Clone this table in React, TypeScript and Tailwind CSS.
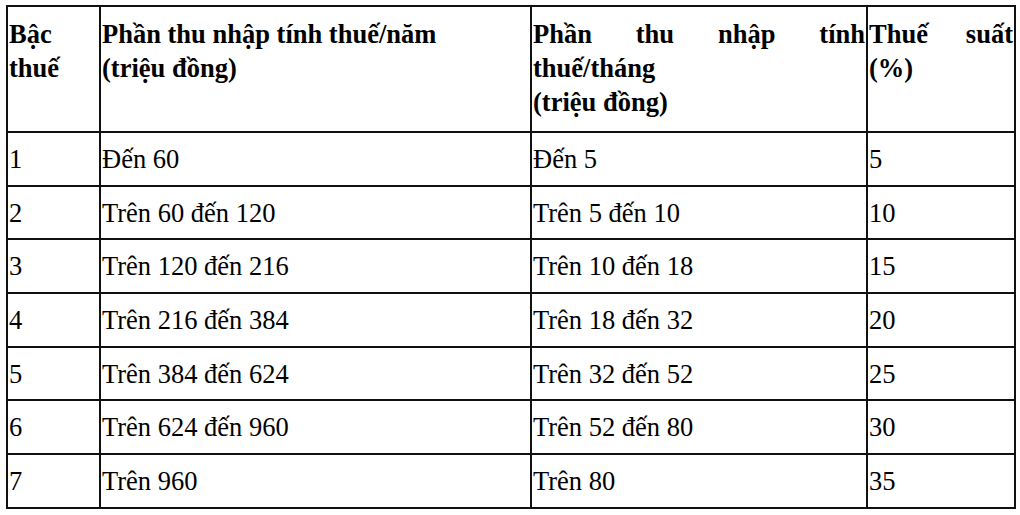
import React from 'react';

interface Bracket {
  level: number;
  yearly: string;
  monthly: string;
  rate: number;
}

const brackets: Bracket[] = [
  { level: 1, yearly: 'Đến 60', monthly: 'Đến 5', rate: 5 },
  { level: 2, yearly: 'Trên 60 đến 120', monthly: 'Trên 5 đến 10', rate: 10 },
  { level: 3, yearly: 'Trên 120 đến 216', monthly: 'Trên 10 đến 18', rate: 15 },
  { level: 4, yearly: 'Trên 216 đến 384', monthly: 'Trên 18 đến 32', rate: 20 },
  { level: 5, yearly: 'Trên 384 đến 624', monthly: 'Trên 32 đến 52', rate: 25 },
  { level: 6, yearly: 'Trên 624 đến 960', monthly: 'Trên 52 đến 80', rate: 30 },
  { level: 7, yearly: 'Trên 960', monthly: 'Trên 80', rate: 35 },
];

const cell = 'border-2 border-[#111] px-[1px] align-middle';
const head = 'border-2 border-[#111] px-[1px] pt-[10px] align-top font-bold';

const App: React.FC = () => {
  return (
    <div className="w-[1020px] h-[515px] bg-white pt-[5px] pl-[6px] text-black font-['Liberation_Serif','Times_New_Roman',serif] text-[26.5px] leading-[34px]">
      <table className="table-fixed border-collapse w-[1008px]">
        <colgroup>
          <col className="w-[93px]" />
          <col className="w-[431px]" />
          <col className="w-[336px]" />
          <col className="w-[148px]" />
        </colgroup>
        <thead>
          <tr className="h-[126px]">
            <th className={`${head} text-left`}>Bậc thuế</th>
            <th className={`${head} text-left`}>
              Phần thu nhập tính thuế/năm
              <br />
              (triệu đồng)
            </th>
            <th className={`${head} text-justify`}>
              Phần thu nhập tính thuế/tháng
              <br />
              (triệu đồng)
            </th>
            <th className={`${head} text-justify`}>Thuế suất (%)</th>
          </tr>
        </thead>
        <tbody>
          {brackets.map((b) => (
            <tr key={b.level} className="h-[53.7px]">
              <td className={cell}>{b.level}</td>
              <td className={cell}>{b.yearly}</td>
              <td className={cell}>{b.monthly}</td>
              <td className={cell}>{b.rate}</td>
            </tr>
          ))}
        </tbody>
      </table>
    </div>
  );
};

export default App;
